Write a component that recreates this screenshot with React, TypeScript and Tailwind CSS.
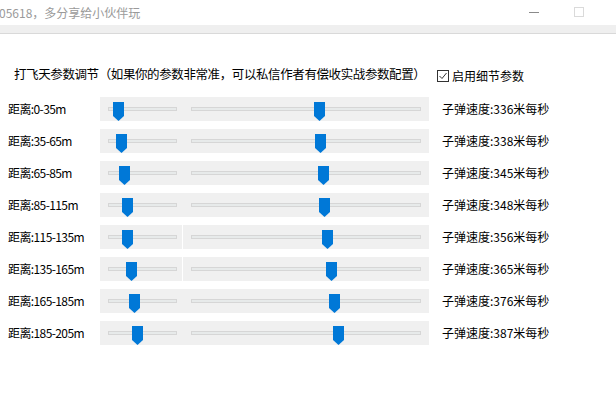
import React from 'react';

type Row = {
  label: string;
  speed: number;
  a: number; // 左侧滑块的 thumb 左边位置（相对 track）
  b: number; // 右侧滑块
  gap?: boolean;
};

const rows: Row[] = [
  { label: '0-35m', speed: 336, a: 4, b: 122 },
  { label: '35-65m', speed: 338, a: 7, b: 123 },
  { label: '65-85m', speed: 345, a: 10, b: 126 },
  { label: '85-115m', speed: 348, a: 13, b: 127 },
  { label: '115-135m', speed: 356, a: 13, b: 130, gap: true },
  { label: '135-165m', speed: 365, a: 17, b: 134, gap: true },
  { label: '165-185m', speed: 376, a: 20, b: 137 },
  { label: '185-205m', speed: 387, a: 23, b: 141 },
];

const font = { fontFamily: '"Noto Sans CJK SC", "Noto Sans", sans-serif' };

const Thumb: React.FC<{ left: number }> = ({ left }) => (
  <svg
    width="11"
    height="19"
    viewBox="0 0 11 19"
    className="absolute top-[-6px]"
    style={{ left }}
  >
    <polygon points="0,0 11,0 11,14 5.5,19 0,14" fill="#0078d7" />
  </svg>
);

const Track: React.FC<{ width: number; thumb: number }> = ({ width, thumb }) => (
  <div
    className="relative h-[4px] bg-[#e7eaea] border border-[#d6d6d6]"
    style={{ width }}
  >
    <Thumb left={thumb} />
  </div>
);

const SliderRow: React.FC<{ row: Row }> = ({ row }) => (
  <div className="flex items-center h-[24px]">
    <div className="w-[100px] pl-[8px] text-[12px] tracking-[-0.6px] text-black leading-none whitespace-nowrap">
      距离:{row.label}
    </div>
    <div className="flex h-full">
      <div className="w-[82px] h-full bg-[#f0f0f0] flex items-center pl-[8px]">
        <Track width={69} thumb={row.a} />
      </div>
      <div
        className={
          row.gap
            ? 'w-[246px] h-full bg-[#f0f0f0] flex items-center pl-[8px] ml-[1px]'
            : 'w-[247px] h-full bg-[#f0f0f0] flex items-center pl-[9px]'
        }
      >
        <Track width={230} thumb={row.b} />
      </div>
    </div>
    <div className="ml-[13px] text-[12px] text-black leading-none whitespace-nowrap">
      子弹速度:{row.speed}米每秒
    </div>
  </div>
);

export default function App() {
  return (
    <div className="w-[616px] h-[412px] bg-white overflow-hidden relative" style={font}>
      {/* 标题栏 */}
      <div className="h-[25px] flex items-center relative">
        <span className="ml-[-1px] text-[12px] text-[#9a9a9a] leading-none whitespace-nowrap">
          05618，多分享给小伙伴玩
        </span>
        <div className="absolute left-[529px] top-[12px] w-[10px] h-[1px] bg-[#8a8a8a]" />
        <div className="absolute left-[574px] top-[7px] w-[10px] h-[10px] border border-[#dadada]" />
      </div>
      <div className="h-[9px] bg-[#efefef] border-b border-[#d9d9d9]" />

      {/* 内容 */}
      <div className="pt-[32px]">
        <div className="flex items-center h-[16px]">
          <div className="pl-[14px] w-[437px] text-[12.5px] tracking-[-0.4px] text-black leading-none whitespace-nowrap">
            打飞天参数调节（如果你的参数非常准，可以私信作者有偿收实战参数配置）
          </div>
          <div className="flex items-center gap-[3px] mt-[4px]">
            <svg width="12" height="12" viewBox="0 0 12 12">
              <rect x="0.5" y="0.5" width="11" height="11" fill="white" stroke="#333" />
              <polyline points="2.5,6 5,8.5 9.5,3" fill="none" stroke="#333" strokeWidth="1" />
            </svg>
            <span className="text-[12px] text-black leading-none whitespace-nowrap">启用细节参数</span>
          </div>
        </div>

        <div className="mt-[15px] flex flex-col gap-[8px]">
          {rows.map((r) => (
            <SliderRow key={r.label} row={r} />
          ))}
        </div>
      </div>
    </div>
  );
}
